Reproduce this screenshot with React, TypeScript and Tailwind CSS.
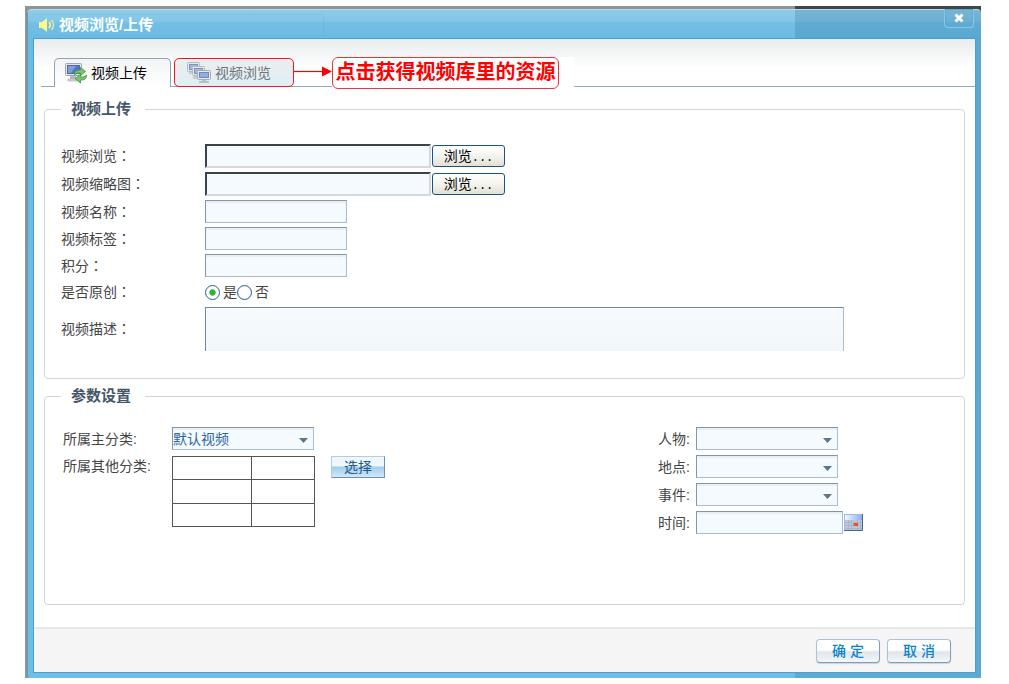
import { useState } from "react";
import type { ReactNode } from "react";

const textInput =
  "h-[23px] w-[142px] border border-[#a9bdd0] border-t-[#8496a8] border-l-[#8496a8] bg-[#f5fafe] px-1 text-sm text-[#2d6699] shadow-[inset_0_2px_1px_#e9eef2] outline-none";

function SpeakerIcon() {
  return (
    <svg width="16" height="16" viewBox="0 0 16 16" aria-hidden="true">
      <path d="M0 5h3l5-4v14l-5-4H0z" fill="#fdf88f" />
      <path d="M10 5q2.500 3 0 6" fill="none" stroke="#fdf88f" strokeWidth="1.600" />
      <path d="M12.500 3q4 5 0 10" fill="none" stroke="#e6f0a4" strokeWidth="1.300" />
    </svg>
  );
}

function UploadIcon() {
  return (
    <svg width="22" height="22" viewBox="0 0 22 22" aria-hidden="true">
      <rect x="0.500" y="1.500" width="16" height="12" rx="1" fill="#e3e5e6" stroke="#a2a7ab" />
      <rect x="2.500" y="3.500" width="12" height="8" fill="#4f78c4" stroke="#52699c" />
      <path d="M3 4h8l-5 7H3z" fill="#7d9fdc" />
      <path d="M5 14h6v3H5z" fill="#b4b9bd" />
      <path d="M3 17h9v2H3z" fill="#d5d8da" stroke="#a2a7ab" strokeWidth="0.600" />
      <path d="M9.500 13c0-4 2-5 6-5V5.500l5 4-5 4V11c-3 0-4 0-6 2z" fill="#7cc46c" stroke="#3b9440" strokeWidth="0.800" />
      <path d="M21.500 13c0 4-2 5-6 5v3l-5.500-4.500 5.500-4V15c3 0 4 0 6-2z" fill="#7cc46c" stroke="#3b9440" strokeWidth="0.800" />
    </svg>
  );
}

function ScreensIcon() {
  return (
    <svg width="24" height="22" viewBox="0 0 24 22" aria-hidden="true">
      <path d="M2 9h6v3H2z" fill="#c5ccd1" />
      <rect x="0.500" y="0.500" width="12" height="9" rx="1" fill="#e5e9ec" stroke="#b4bac0" />
      <rect x="2.500" y="2.500" width="8" height="5" fill="#a3b7de" stroke="#8192b8" />
      <path d="M6 13h6v4H6z" fill="#c5ccd1" />
      <rect x="5.500" y="4.500" width="12" height="9" rx="1" fill="#e5e9ec" stroke="#b4bac0" />
      <rect x="7.500" y="6.500" width="8" height="5" fill="#a3b7de" stroke="#8192b8" />
      <rect x="10.500" y="8.500" width="13" height="9" rx="1" fill="#e5e9ec" stroke="#a5acb3" />
      <rect x="12.500" y="10.500" width="9" height="5" fill="#90aee0" stroke="#7488b4" />
      <path d="M15 18h4v1h3v2H12v-2h3z" fill="#b8bfc5" />
    </svg>
  );
}

function CalendarIcon() {
  return (
    <svg width="19" height="17" viewBox="0 0 19 17" aria-hidden="true">
      <defs>
        <linearGradient id="cal" x1="0" y1="0" x2="1" y2="0">
          <stop offset="0" stopColor="#f2f6ff" />
          <stop offset="1" stopColor="#8fa9fa" />
        </linearGradient>
      </defs>
      <rect width="19" height="17" fill="#bcc7da" />
      <path d="M1 1h17v5H1z" fill="url(#cal)" />
      <path d="M1 8.500h17M1 11.500h17M1 14.500h17M4.500 6v10M7.500 6v10M13.500 6v10M16.500 6v10" stroke="#9dacc6" strokeWidth="0.600" />
      <path d="M9.500 9h4.500v3H9.500z" fill="#e9532a" />
      <path d="M0.500 16V0.500H18" fill="none" stroke="#a3b8dc" />
      <path d="M18.500 0v16.500H0" fill="none" stroke="#416a8c" />
    </svg>
  );
}

function Label({ htmlFor, children }: { htmlFor: string; children: ReactNode }) {
  return (
    <label htmlFor={htmlFor} className="self-center leading-5 whitespace-nowrap">
      {children}
      <span className="font-['Noto_Sans_CJK_TC',sans-serif] leading-none">：</span>
    </label>
  );
}

function FilePicker({ id }: { id: string }) {
  return (
    <div className="flex items-center gap-px">
      <input
        id={id}
        type="text"
        className="h-6 w-[226px] border-2 border-[#d3d9de] border-t-[#3b444c] border-l-[#3b444c] bg-[#f5fafe] px-1 outline-none"
      />
      <button
        type="button"
        className="h-[22px] w-[73px] rounded-[3px] border border-[#1d5286] bg-linear-to-b from-white via-[#f4f4ef] to-[#e2e0d4] text-sm leading-[18px] text-black"
      >
        浏览<span className="font-['Liberation_Mono',monospace] text-xs">...</span>
      </button>
    </div>
  );
}

function Select({ id, options }: { id: string; options: string[] }) {
  return (
    <div className="relative w-[142px]">
      <select
        id={id}
        className="block h-[23px] w-full appearance-none border border-[#a9bdd0] border-t-[#8496a8] border-l-[#8496a8] bg-[#f5fafe] text-sm leading-5 text-[#2d6699] shadow-[inset_0_2px_1px_#e9eef2] outline-none"
      >
        {options.map((o) => (
          <option key={o}>{o}</option>
        ))}
      </select>
      <svg width="9" height="5" viewBox="0 0 9 5" className="pointer-events-none absolute top-[11px] right-[6px]" aria-hidden="true">
        <path d="M0 0h9L4.500 5z" fill="#5f7688" />
      </svg>
    </div>
  );
}

function Section({ title, className, children }: { title: string; className: string; children: ReactNode }) {
  return (
    <fieldset className={`mx-[10px] rounded-[4px] border border-[#d4d4d4] px-4 ${className}`}>
      <legend className="h-[22px] pr-[14px] pl-[10px] text-[15px] leading-[22px] font-bold text-[#44566a]">{title}</legend>
      {children}
    </fieldset>
  );
}

function Tabs() {
  const [tab, setTab] = useState("upload");
  return (
    <div role="tablist" className="ml-[7px] flex h-[29px] gap-[3px] border-b border-[#94a9bd] pl-[13px]">
      <button
        type="button"
        role="tab"
        aria-selected={tab === "upload"}
        onClick={() => setTab("upload")}
        className="-mb-px flex w-[117px] items-center gap-1 rounded-t-[5px] border border-b-0 border-[#91a3b5] bg-linear-to-b from-[#f2f4f5] to-white pl-[10px] text-sm text-black"
      >
        <UploadIcon />
        视频上传
      </button>
      <div className="relative -mb-px w-[120px]">
        <button
          type="button"
          role="tab"
          aria-selected={tab === "browse"}
          onClick={() => setTab("browse")}
          className="flex h-full w-full items-center gap-1 rounded-[5px] border border-[#f01820] bg-linear-to-b from-[#eceeef] to-[#e0eef3] pl-3 text-sm text-[#6c757c]"
        >
          <ScreensIcon />
          视频浏览
        </button>
        <div className="absolute -top-px left-full flex h-[33px] w-[280px] items-center">
          <svg width="38" height="11" viewBox="0 0 38 11" className="-mt-1 shrink-0" aria-hidden="true">
            <path d="M0 5.500h30" stroke="#f00" strokeWidth="1.200" />
            <path d="M28 0.500L38 5.500l-10 5z" fill="#f00" />
          </svg>
          <div className="h-full flex-1 bg-white">
            <div className="h-8 w-[227px] rounded-[6px] border border-[#f2323a] text-center text-xl leading-[29px] font-bold whitespace-nowrap text-[#f00]">
              点击获得视频库里的资源
            </div>
          </div>
        </div>
      </div>
    </div>
  );
}

function UploadForm() {
  return (
    <div className="grid grid-cols-[144px_1fr] gap-y-1 pt-6">
      <Label htmlFor="video">视频浏览</Label>
      <FilePicker id="video" />
      <Label htmlFor="thumb">视频缩略图</Label>
      <FilePicker id="thumb" />
      <Label htmlFor="name">视频名称</Label>
      <input id="name" type="text" className={textInput} />
      <Label htmlFor="tags">视频标签</Label>
      <input id="tags" type="text" className={textInput} />
      <Label htmlFor="score">积分</Label>
      <input id="score" type="text" className={textInput} />
      <Label htmlFor="original-yes">是否原创</Label>
      <div className="flex h-[22px] items-center">
        <Radio id="original-yes" label="是" checked />
        <Radio id="original-no" label="否" />
      </div>
      <Label htmlFor="desc">视频描述</Label>
      <textarea
        id="desc"
        className="block h-11 w-full max-w-[639px] resize-none border border-b-0 border-[#a9bdd0] border-t-[#75889a] border-l-[#75889a] bg-linear-to-b from-[#f7fbfd] to-[#f1f7fb] outline-none"
      />
    </div>
  );
}

function Radio({ id, label, checked }: { id: string; label: string; checked?: boolean }) {
  return (
    <label className="flex items-center gap-[3px]">
      <input
        id={id}
        type="radio"
        name="original"
        defaultChecked={checked}
        className="h-[15px] w-[15px] appearance-none rounded-full border border-[#2a6092] bg-radial from-white from-50% to-[#dcdcd5] checked:bg-radial checked:from-[#2fb52f] checked:from-30% checked:to-white checked:to-40%"
      />
      {label}
    </label>
  );
}

const FIELDS = [
  { id: "person", label: "人物" },
  { id: "place", label: "地点" },
  { id: "event", label: "事件" },
];

function Settings() {
  return (
    <div className="flex justify-between pt-5 pr-[85px] pl-[2px]">
      <div className="grid grid-cols-[109px_1fr] content-start gap-y-[6px]">
        <label htmlFor="category" className="self-center">所属主分类:</label>
        <Select id="category" options={["默认视频"]} />
        <span className="leading-5">所属其他分类:</span>
        <div className="flex items-start gap-4">
          <table className="h-[71px] w-[143px] border-collapse">
            <tbody>
              {[0, 1, 2].map((row) => (
                <tr key={row}>
                  <td className="w-[79px] border border-[#555]" />
                  <td className="border border-[#555]" />
                </tr>
              ))}
            </tbody>
          </table>
          <button
            type="button"
            className="h-[22px] w-[54px] border border-[#b4cde0] border-r-[#6f8fae] border-b-[#6f8fae] bg-linear-to-b from-[#eef8fb] from-45% via-[#9fcdea] via-50% to-[#d4e8f8] text-sm leading-5 text-[#22598c]"
          >
            选择
          </button>
        </div>
      </div>
      <div className="grid grid-cols-[38px_1fr] content-start gap-y-[5px]">
        {FIELDS.map((f) => (
          <div key={f.id} className="contents">
            <label htmlFor={f.id} className="self-center">{f.label}:</label>
            <Select id={f.id} options={[""]} />
          </div>
        ))}
        <label htmlFor="time" className="self-center">时间:</label>
        <div className="flex items-center gap-px">
          <input
            id="time"
            type="text"
            className="h-[23px] w-[147px] border border-[#a9bdd0] border-t-[#8496a8] border-l-[#8496a8] bg-[#f5fafe] px-1 shadow-[inset_0_2px_1px_#e9eef2] outline-none"
          />
          <button type="button" aria-label="时间">
            <CalendarIcon />
          </button>
        </div>
      </div>
    </div>
  );
}

const footerButton =
  "h-6 w-16 rounded-[4px] border border-[#a8c3dc] border-r-[#7f9ebb] border-b-[#7f9ebb] bg-linear-to-b from-white from-45% via-[#dfe5ea] via-55% to-[#f4f7f9] text-sm leading-5 font-medium text-[#0a84cc] shadow-[0_1px_1px_#ccd3da]";

export default function App() {
  return (
    <div className="min-h-screen bg-white pt-[6px] pr-7 pl-[25px] font-['Liberation_Sans','Noto_Sans_CJK_SC',sans-serif] text-sm leading-5 text-[#444]">
      <div className="bg-[linear-gradient(to_left,#444_186px,#929492_186px)] pt-[3px] pl-[2px]">
        <div className="rounded-t-[4px] rounded-bl-[3px] bg-[linear-gradient(to_left,#145a8233_186px,transparent_186px),linear-gradient(#8fcbe9,#83c6e7_12px,#73bfe6_14px,#6bbbe4_29px,#6fbee5)] pr-[5px] pb-[5px] pl-[6px] shadow-[inset_0_1px_0_#b9dcec,inset_1px_0_0_#559cc4]">
          <header className="flex h-[29px] items-start justify-between">
            <div className="mt-[5px] flex h-[22px] w-[291px] items-center gap-1 border border-l-0 border-[#3c96c81f] pl-[6px]">
              <SpeakerIcon />
              <h1 className="text-[15px] leading-5 font-bold whitespace-nowrap text-white">视频浏览/上传</h1>
            </div>
            <button
              type="button"
              aria-label="关闭"
              className="mr-[2px] flex h-[19px] w-[30px] items-center justify-center rounded-b-[4px] border border-t-0 border-[#86c9ee] shadow-[inset_0_0_0_1px_#5da9d4]"
            >
              <svg width="10" height="10" viewBox="0 0 10 10" aria-hidden="true">
                <path d="M1.500 1.500l7 7M8.500 1.500l-7 7" stroke="#fff" strokeWidth="3" />
              </svg>
            </button>
          </header>
          <main className="border border-[#4c9dd2] bg-white">
            <div className="bg-[linear-gradient(#e8eced,#fff_29px)] pt-[19px]">
              <Tabs />
            </div>
            <Section title="视频上传" className="mt-[11px] pb-[27px]">
              <UploadForm />
            </Section>
            <Section title="参数设置" className="mt-[6px] min-h-[220px]">
              <Settings />
            </Section>
            <footer className="mt-[22px] flex justify-end gap-[7px] border-t-2 border-[#e7e8ec] bg-[#f5f5f5] pt-[10px] pr-6 pb-[9px]">
              <button type="button" className={footerButton}>确 定</button>
              <button type="button" className={footerButton}>取 消</button>
            </footer>
          </main>
        </div>
      </div>
    </div>
  );
}
